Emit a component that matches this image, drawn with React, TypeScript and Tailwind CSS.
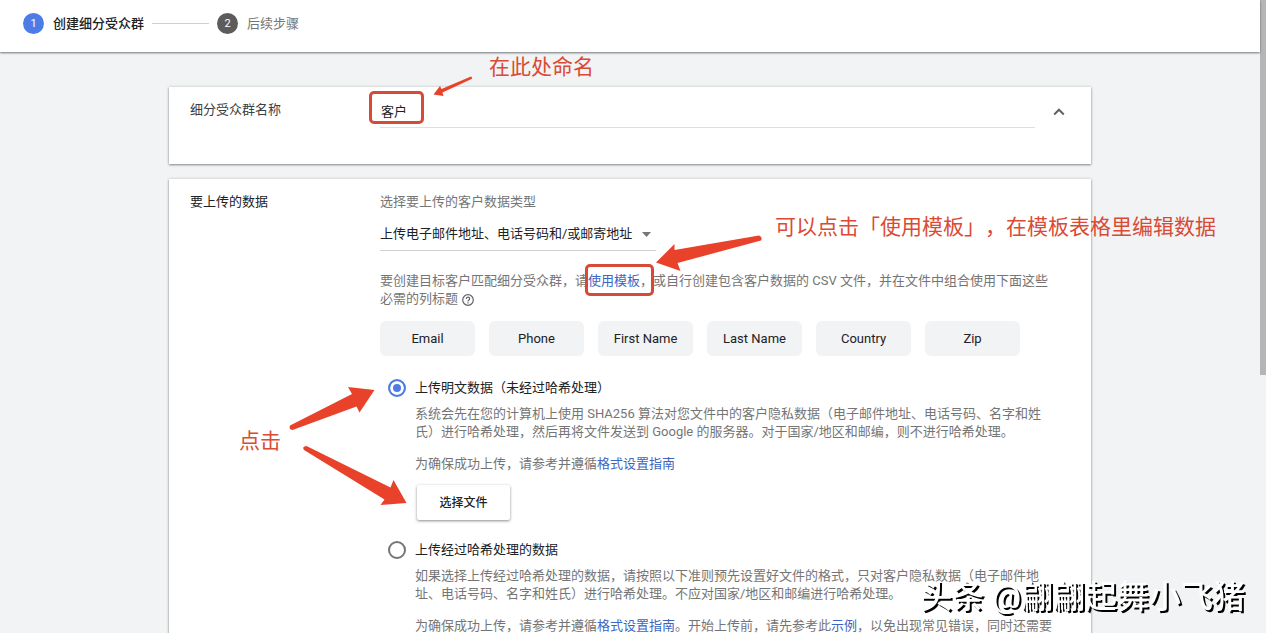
import React from "react";

const columns = ["Email", "Phone", "First Name", "Last Name", "Country", "Zip"];

const linkClass = "text-[#3c65c4] no-underline hover:underline";

function Card({ children, className = "" }: { children: React.ReactNode; className?: string }) {
  return (
    <section
      className={`flex bg-white px-[21px] shadow-[0_1px_2px_rgba(60,64,67,0.55),0_0_3px_rgba(60,64,67,0.18)] ${className}`}
    >
      {children}
    </section>
  );
}

function UploadOption({
  id,
  title,
  checked = false,
  children,
}: {
  id: string;
  title: string;
  checked?: boolean;
  children: React.ReactNode;
}) {
  return (
    <div className="flex items-start gap-[9px] pl-2">
      <input
        type="radio"
        id={id}
        name="upload-type"
        defaultChecked={checked}
        className="size-[18px] shrink-0 appearance-none rounded-full border-2 border-[#757575] bg-white checked:border-[#4d7ce6] checked:bg-[#4d7ce6] checked:shadow-[inset_0_0_0_3px_#fff]"
      />
      <div className="min-w-0 flex-1">
        <label htmlFor={id} className="block text-[#202124]">
          {title}
        </label>
        <div className="mt-2 max-w-[638px] text-[#757575]">{children}</div>
      </div>
    </div>
  );
}

// Hand-drawn notes placed over the form
function Annotations() {
  return (
    <div className="pointer-events-none absolute inset-0 text-[21px] leading-[30px] whitespace-nowrap text-[#da4a34]">
      <span className="absolute top-0 left-[320px]">在此处命名</span>
      <span className="absolute top-[160px] left-[606px]">可以点击「使用模板」，在模板表格里编辑数据</span>
      <span className="absolute top-[374px] left-[70px]">点击</span>
      <div className="absolute top-[39px] left-[200px] h-[33px] w-[55px] rounded-[5px] border-[3px] border-[#d64a36]" />
      <div className="absolute top-[212px] left-[416px] h-[32px] w-[69px] rounded-[5px] border-[3px] border-[#d64a36]" />
      <svg className="absolute top-0 left-0 h-[581px] w-[922px] fill-[#e8432a]" viewBox="169 52 922 581">
        <path d="M471 76.500 Q473 78 471.500 79 L442.500 92.500 L443.500 96 L433.500 94.500 L440 86 L441.500 89 Z" />
        <path d="M759 235.500 Q763 237 761 240.500 L677.500 263 L680.500 271 L656 262.500 L674.500 244 L674.500 250 Z" />
        <path d="M290 425.500 L352 394 L348 387 L374.500 390 L359.500 412.500 L356.500 406.500 L292.500 430 Q288.500 429.500 290 425.500 Z" />
        <path d="M306.500 446 L390.500 487.500 L393.500 480 L406.500 503 L380.500 505 L384.500 499.500 L304 450 Q301.500 446.500 306.500 446 Z" />
      </svg>
    </div>
  );
}

export default function App() {
  return (
    <div
      className="flex h-screen overflow-hidden bg-[#f1f3f4] text-[13px] leading-[18px] [text-spacing-trim:space-all]"
      style={{ fontFamily: 'Roboto, "Noto Sans CJK SC", sans-serif' }}
      lang="zh-CN"
    >
      <div className="flex min-w-0 flex-1 flex-col">
        <header className="z-10 h-[52px] shrink-0 bg-white px-[23px] pt-[13px] shadow-[0_1px_2px_rgba(60,64,67,0.7)]">
          <ol className="flex items-center">
            <li className="flex items-center gap-[9px] font-medium text-[#202124]">
              <span className="flex size-[21px] items-center justify-center rounded-full bg-[#4d7ce6] text-[11px] font-normal text-white">1</span>
              创建细分受众群
            </li>
            <li aria-hidden="true" className="mx-2 h-px w-[57px] bg-[#cfcfcf]" />
            <li className="flex items-center gap-[9px] text-[#757575]">
              <span className="flex size-[21px] items-center justify-center rounded-full bg-[#5c5c5c] text-[11px] text-white">2</span>
              后续步骤
            </li>
          </ol>
        </header>

        <main className="min-h-0 flex-1">
          <div className="relative mx-auto max-w-[922px] pt-[35px]">
            {/* Name */}
            <Card className="h-[77px]">
              <label htmlFor="segment-name" className="w-[190px] shrink-0 pt-[14px] text-[#3c4043]">
                细分受众群名称
              </label>
              <input
                id="segment-name"
                type="text"
                defaultValue="客户"
                className="mt-2 h-[33px] min-w-0 flex-1 border-b border-[#dfdfdf] bg-transparent pb-[2px] pl-px text-[#202124] outline-none"
              />
              <button type="button" aria-label="收起" className="mt-[13px] ml-[12px] flex size-[23px] items-center justify-center text-[#5f6368]">
                <svg className="size-3" viewBox="0 0 12 12" fill="none" stroke="currentColor" strokeWidth="2">
                  <path d="M1.200 8.500 L6 3.700 L10.800 8.500" />
                </svg>
              </button>
            </Card>

            {/* Upload */}
            <Card className="mt-[15px] pt-[14px] pb-10">
              <h2 className="w-[190px] shrink-0 text-[#202124]">要上传的数据</h2>
              <div className="min-w-0 flex-1">
                <label htmlFor="data-type" className="block text-[#757575]">
                  选择要上传的客户数据类型
                </label>
                <div className="relative mt-[7px] w-[276px]">
                  <select
                    id="data-type"
                    className="block h-[33px] w-full appearance-none border-b border-[#d0d0d0] bg-transparent text-[#202124] outline-none"
                  >
                    <option>上传电子邮件地址、电话号码和/或邮寄地址</option>
                  </select>
                  <svg className="pointer-events-none absolute top-[14px] right-[5px] h-[5px] w-[9px] fill-[#757575]" viewBox="0 0 9 5">
                    <path d="M0 0 H9 L4.500 5 Z" />
                  </svg>
                </div>

                <p className="mt-[21px] max-w-[678px] text-[#757575]">
                  要创建目标客户匹配细分受众群，请<a href="#template" className={linkClass}>使用模板</a>，或自行创建包含客户数据的 CSV 文件，并在文件中组合使用下面这些必需的列标题
                  <svg className="ml-1 inline size-[12px]" viewBox="0 0 12 12" fill="none" stroke="#5f6368" strokeWidth="1.200">
                    <circle cx="6" cy="6" r="5.300" />
                    <path d="M4.300 4.900 C4.300 2.500 7.700 2.500 7.700 4.700 C7.700 5.900 6 6 6 7.500 M6 8.300 V9.500" />
                  </svg>
                </p>

                <ul className="mt-[13px] flex gap-[14px] text-[#202124]">
                  {columns.map((name) => (
                    <li key={name} className="flex h-[35px] w-[95px] items-center justify-center rounded-md bg-[#f1f3f4]">
                      {name}
                    </li>
                  ))}
                </ul>

                <div role="radiogroup" aria-label="要上传的数据" className="mt-[23px] flex flex-col gap-[21px]">
                  <UploadOption id="plain" title="上传明文数据（未经过哈希处理）" checked>
                    <p>
                      系统会先在您的计算机上使用 SHA256 算法对您文件中的客户隐私数据（电子邮件地址、电话号码、名字和姓氏）进行哈希处理，然后再将文件发送到 Google 的服务器。对于国家/地区和邮编，则不进行哈希处理。
                    </p>
                    <p className="mt-[14px]">
                      为确保成功上传，请参考并遵循<a href="#format" className={linkClass}>格式设置指南</a>
                    </p>
                    <button
                      type="button"
                      className="mt-3 ml-[2px] h-[35px] w-[93px] rounded-[2px] bg-white text-xs font-medium text-[#202124] shadow-[0_1px_3px_rgba(60,64,67,0.6)]"
                    >
                      选择文件
                    </button>
                  </UploadOption>
                  <UploadOption id="hashed" title="上传经过哈希处理的数据">
                    <p>
                      如果选择上传经过哈希处理的数据，请按照以下准则预先设置好文件的格式，只对客户隐私数据（电子邮件地址、电话号码、名字和姓氏）进行哈希处理。不应对国家/地区和邮编进行哈希处理。
                    </p>
                    <p className="mt-[14px]">
                      为确保成功上传，请参考并遵循<a href="#format" className={linkClass}>格式设置指南</a>。开始上传前，请先参考此<a href="#sample" className={linkClass}>示例</a>，以免出现常见错误，同时还需要
                    </p>
                  </UploadOption>
                </div>
              </div>
            </Card>

            <Annotations />
          </div>
        </main>
      </div>

      {/* Scrollbar */}
      <div aria-hidden="true" className="w-[6px] shrink-0 bg-[#f1f3f4]">
        <div className="h-[375px] bg-[#b5b5b5]" />
      </div>

      <p className="fixed right-[21px] bottom-[12px] z-20 text-[32px] leading-[48px] font-medium whitespace-nowrap text-white [text-shadow:2px_2px_0_#000]">
        头条 @翩翩起舞小飞猪
      </p>
    </div>
  );
}
